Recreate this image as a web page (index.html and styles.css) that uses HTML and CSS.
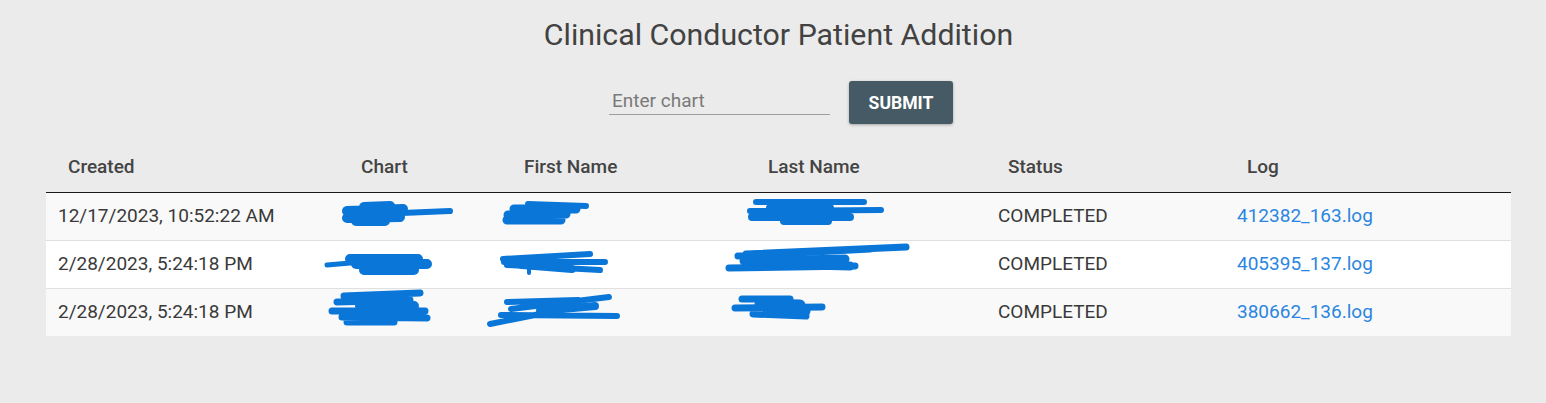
FILE: index.html
```html
<!DOCTYPE html>
<html lang="en">
<head>
<meta charset="utf-8">
<title>Clinical Conductor Patient Addition</title>
<link rel="stylesheet" href="styles.css">
</head>
<body>
<div class="page">
  <h1 class="title">Clinical Conductor Patient Addition</h1>
  <form class="entry">
    <input class="chart-input" type="text" placeholder="Enter chart">
    <button class="submit" type="button">SUBMIT</button>
  </form>
  <div class="table-wrap">
    <table class="log-table">
      <colgroup>
        <col class="c-created"><col class="c-chart"><col class="c-first"><col class="c-last"><col class="c-status"><col class="c-log">
      </colgroup>
      <thead>
        <tr><th>Created</th><th>Chart</th><th>First Name</th><th>Last Name</th><th>Status</th><th>Log</th></tr>
      </thead>
      <tbody>
        <tr><td>12/17/2023, 10:52:22 AM</td><td></td><td></td><td></td><td>COMPLETED</td><td><a href="#">412382_163.log</a></td></tr>
        <tr><td>2/28/2023, 5:24:18 PM</td><td></td><td></td><td></td><td>COMPLETED</td><td><a href="#">405395_137.log</a></td></tr>
        <tr><td>2/28/2023, 5:24:18 PM</td><td></td><td></td><td></td><td>COMPLETED</td><td><a href="#">380662_136.log</a></td></tr>
      </tbody>
    </table>
    <svg class="redactions" viewBox="0 0 1465 192" preserveAspectRatio="none" aria-hidden="true">
      <g transform="translate(-46 -144)" fill="none" stroke="#0a76d8" stroke-linecap="round" stroke-linejoin="round">
        <!-- row 1 chart -->
        <path stroke-width="10" d="M347 211 L403 209 M347 218 L400 217 M356 221 L385 221 M364 207 L390 206"/>
        <path stroke-width="6" d="M378 214 L450 211"/>
        <!-- row 1 first -->
        <path stroke-width="6" d="M528 204 L586 206"/>
        <path stroke-width="9" d="M514 209 L576 209 M508 215 L566 214 M507 220 L561 220"/>
        <!-- row 1 last -->
        <path stroke-width="6" d="M756 202 L864 202 M750 211 L881 210"/>
        <path stroke-width="8" d="M752 217 L850 217 M770 208 L830 208 M784 221 L828 221"/>
        <!-- row 2 chart -->
        <path stroke-width="5" d="M327 265 L362 262"/>
        <path stroke-width="10" d="M350 259 L418 259 M356 264 L427 264 M364 270 L414 270"/>
        <!-- row 2 first -->
        <path stroke-width="6" d="M503 259 L590 254 M504 262 L605 262 M507 265 L600 270"/>
        <path stroke-width="8" d="M522 265 L572 269"/>
        <path stroke-width="4" d="M529 266 L529 273"/>
        <!-- row 2 last -->
        <path stroke-width="7" d="M738 256 L870 249 M746 254 L906 247 M729 268 L855 266"/>
        <path stroke-width="9" d="M744 261 L845 259 M774 264 L850 266"/>
        <!-- row 3 chart -->
        <path stroke-width="7" d="M344 296 L420 293 M337 302 L410 300 M332 311 L425 311 M342 317 L427 318 M347 322 L394 322"/>
        <path stroke-width="10" d="M360 306 L414 306 M366 313 L396 314"/>
        <!-- row 3 first -->
        <path stroke-width="6" d="M490 324 L580 306 M507 302 L578 300 M511 309 L609 297 M501 315 L617 316"/>
        <path stroke-width="8" d="M540 311 L595 306"/>
        <!-- row 3 last -->
        <path stroke-width="7" d="M742 299 L790 299 M735 308 L822 307 M753 314 L806 316"/>
        <path stroke-width="11" d="M760 304 L800 305 M772 311 L805 311"/>
      </g>
    </svg>
  </div>
</div>
</body>
</html>
```
FILE: styles.css
```css
* { box-sizing: border-box; }

html, body {
  margin: 0;
  padding: 0;
  background: #ebebeb;
}

body {
  font-family: Roboto, "Liberation Sans", Arial, sans-serif;
  color: #3a3a3a;
}

.page {
  padding: 0 35px 0 46px;
}

.title {
  margin: 0;
  padding-top: 17px;
  height: 80px;
  text-align: center;
  font-size: 30.3px;
  font-weight: 400;
  color: #424242;
  line-height: 36px;
}

.entry {
  display: flex;
  justify-content: center;
  align-items: flex-start;
  gap: 19px;
  margin: 0;
  height: 44px;
  padding: 1px 0 0 5px;
}

.chart-input {
  width: 221px;
  height: 34px;
  border: 0;
  border-bottom: 1.5px solid #9e9e9e;
  background: transparent;
  font-family: Roboto, "Liberation Sans", Arial, sans-serif;
  font-size: 19px;
  padding: 6px 3px 0;
  color: #333;
  outline: none;
}

.chart-input::placeholder {
  color: #7a7a7a;
}

.submit {
  width: 104px;
  height: 43px;
  border: 0;
  border-radius: 3px;
  background: #455a64;
  color: #fff;
  font-family: Roboto, "Liberation Sans", Arial, sans-serif;
  font-weight: 700;
  font-size: 17.6px;
  box-shadow: 0 1px 3px rgba(0,0,0,0.3);
}

.table-wrap {
  position: relative;
  width: 1465px;
  margin-top: 20px;
}

.log-table {
  width: 1465px;
  table-layout: fixed;
  border-collapse: collapse;
  font-size: 19px;
}

.c-created { width: 293px; }
.c-chart { width: 163px; }
.c-first { width: 244px; }
.c-last { width: 240px; }
.c-status { width: 239px; }
.c-log { width: 286px; }

.log-table th {
  height: 48px;
  text-align: left;
  padding: 0 0 3px 22px;
  font-weight: 500;
  font-size: 19px;
  color: #444;
  border-bottom: 1px solid #1a1a1a;
}

.log-table td {
  height: 48px;
  padding: 0 0 1px 12px;
  color: #3a3a3a;
  border-bottom: 1px solid #e0e0e0;
  white-space: nowrap;
}

.log-table tbody tr:nth-child(odd) { background: #f9f9f9; }
.log-table tbody tr:nth-child(even) { background: #ffffff; }
.log-table tbody tr:last-child td { border-bottom: 0; }

.log-table a {
  color: #2a86e0;
  text-decoration: none;
}

.redactions {
  position: absolute;
  left: 0;
  top: 0;
  width: 1465px;
  height: 192px;
  pointer-events: none;
  overflow: visible;
}
```
